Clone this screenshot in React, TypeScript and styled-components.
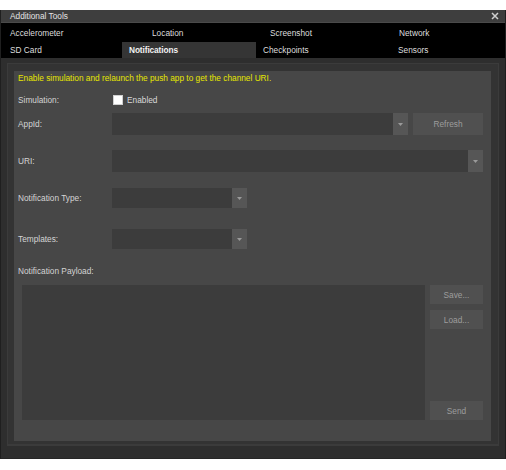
import React from "react";
import styled, { createGlobalStyle } from "styled-components";

const Global = createGlobalStyle`
  html, body { margin: 0; padding: 0; background: #ffffff; }
  body { font-family: "Liberation Sans", Arial, sans-serif; }
`;

const Window = styled.div`
  margin-top: 10px;
  width: 506px;
  height: 449px;
  box-sizing: border-box;
  background: #2e2e2e;
  border-left: 1px solid #1f1f1f;
  border-right: 1px solid #1f1f1f;
  border-bottom: 1px solid #262626;
  display: flex;
  flex-direction: column;
  font-size: 8.3px;
  color: #d8d8d8;
`;

const TitleBar = styled.div`
  height: 12px;
  border-bottom: 1px solid #4a4a4a;
  background: #3e3e3e;
  display: flex;
  align-items: center;
  justify-content: space-between;
  padding: 0 6px 0 9px;
  color: #e4e4e4;
`;

const CloseGlyph = styled.svg`
  width: 8px;
  height: 8px;
  display: block;
`;

const TabStrip = styled.div`
  background: #000;
  display: flex;
  flex-direction: column;
`;

const TabRow = styled.div<{ $h: number; $top: number }>`
  height: ${(p) => p.$h}px;
  padding-top: ${(p) => p.$top}px;
  box-sizing: border-box;
  display: flex;
  padding-left: 2px;
`;

const Tab = styled.div<{ $w: number; $active?: boolean }>`
  width: ${(p) => p.$w}px;
  flex: none;
  box-sizing: border-box;
  padding-left: 7px;
  display: flex;
  align-items: center;
  background: ${(p) => (p.$active ? "#353535" : "transparent")};
  color: ${(p) => (p.$active ? "#f2f2f2" : "#dedede")};
  font-weight: ${(p) => (p.$active ? 700 : 400)};
  letter-spacing: ${(p) => (p.$active ? "-0.1px" : "0")};
`;

const Page = styled.div`
  margin: 5px 6px 12px 6px;
  flex: 1;
  border: 1px solid #3b3b3b;
  border-bottom-width: 2px;
  background: #333333;
  padding: 7px 7px 3px 6px;
  display: flex;
  flex-direction: column;
`;

const Panel = styled.div`
  flex: 1;
  background: #474747;
  padding: 0 8px 0 4px;
  display: flex;
  flex-direction: column;
`;

const Notice = styled.div`
  height: 14px;
  line-height: 14px;
  color: #e6e600;
`;

const Row = styled.div<{ $mt: number; $h: number }>`
  margin-top: ${(p) => p.$mt}px;
  height: ${(p) => p.$h}px;
  display: grid;
  grid-template-columns: 94px 1fr;
  align-items: center;
`;

const Label = styled.div`
  color: #d4d4d4;
`;

const Controls = styled.div`
  display: flex;
  align-items: center;
  gap: 5px;
  height: 100%;
`;

const CheckBox = styled.div`
  width: 10px;
  height: 10px;
  box-sizing: border-box;
  background: #ffffff;
  border: 1px solid #d0d0d0;
  margin-left: 1px;
`;

const CheckText = styled.span`
  margin-left: -1px;
  color: #dadada;
`;

const Combo = styled.div<{ $w: number }>`
  width: ${(p) => p.$w}px;
  height: 100%;
  display: flex;
  background: #3c3c3c;
`;

const ComboField = styled.div`
  flex: 1;
`;

const DropButton = styled.div`
  width: 15px;
  height: 100%;
  background: #565656;
  display: flex;
  align-items: center;
  justify-content: center;
`;

const Arrow = styled.svg`
  width: 5px;
  height: 3px;
  display: block;
`;

const Button = styled.div<{ $w: number; $h?: number }>`
  width: ${(p) => p.$w}px;
  height: ${(p) => (p.$h ? `${p.$h}px` : "100%")};
  background: #505050;
  color: #9d9d9d;
  display: flex;
  align-items: center;
  justify-content: center;
  flex: none;
`;

const PayloadLabel = styled.div`
  margin-top: 15px;
  height: 14px;
  line-height: 14px;
  color: #d4d4d4;
`;

const PayloadArea = styled.div`
  margin-top: 7px;
  height: 135px;
  margin-left: 4px;
  display: flex;
  gap: 5px;
`;

const PayloadBox = styled.div`
  flex: 1;
  background: #3c3c3c;
`;

const ButtonColumn = styled.div`
  width: 53px;
  display: flex;
  flex-direction: column;
  gap: 6px;
`;

const Spacer = styled.div`
  flex: 1;
`;

const Drop = () => (
  <DropButton>
    <Arrow viewBox="0 0 5 3">
      <path d="M0 0 H5 L2.5 3 Z" fill="#9a9a9a" />
    </Arrow>
  </DropButton>
);

export default function App() {
  return (
    <>
      <Global />
      <Window>
        <TitleBar>
          <span>Additional Tools</span>
          <CloseGlyph viewBox="0 0 8 8">
            <path d="M1 1 L7 7 M7 1 L1 7" stroke="#d0d0d0" strokeWidth="1.5" />
          </CloseGlyph>
        </TitleBar>
        <TabStrip>
          <TabRow $h={18} $top={2}>
            <Tab $w={142}>Accelerometer</Tab>
            <Tab $w={118}>Location</Tab>
            <Tab $w={129}>Screenshot</Tab>
            <Tab $w={113}>Network</Tab>
          </TabRow>
          <TabRow $h={17} $top={1}>
            <Tab $w={119}>SD Card</Tab>
            <Tab $w={134} $active>
              Notifications
            </Tab>
            <Tab $w={135}>Checkpoints</Tab>
            <Tab $w={114}>Sensors</Tab>
          </TabRow>
        </TabStrip>
        <Page>
          <Panel>
            <Notice>Enable simulation and relaunch the push app to get the channel URI.</Notice>
            <Row $mt={7} $h={16}>
              <Label>Simulation:</Label>
              <Controls>
                <CheckBox />
                <CheckText>Enabled</CheckText>
              </Controls>
            </Row>
            <Row $mt={5} $h={22}>
              <Label>AppId:</Label>
              <Controls>
                <Combo $w={296}>
                  <ComboField />
                  <Drop />
                </Combo>
                <Button $w={70}>Refresh</Button>
              </Controls>
            </Row>
            <Row $mt={15} $h={22}>
              <Label>URI:</Label>
              <Controls>
                <Combo $w={371}>
                  <ComboField />
                  <Drop />
                </Combo>
              </Controls>
            </Row>
            <Row $mt={16} $h={20}>
              <Label>Notification Type:</Label>
              <Controls>
                <Combo $w={135}>
                  <ComboField />
                  <Drop />
                </Combo>
              </Controls>
            </Row>
            <Row $mt={21} $h={20}>
              <Label>Templates:</Label>
              <Controls>
                <Combo $w={135}>
                  <ComboField />
                  <Drop />
                </Combo>
              </Controls>
            </Row>
            <PayloadLabel>Notification Payload:</PayloadLabel>
            <PayloadArea>
              <PayloadBox />
              <ButtonColumn>
                <Button $w={53} $h={19}>Save...</Button>
                <Button $w={53} $h={19}>Load...</Button>
                <Spacer />
                <Button $w={53} $h={19}>Send</Button>
              </ButtonColumn>
            </PayloadArea>
          </Panel>
        </Page>
      </Window>
    </>
  );
}
